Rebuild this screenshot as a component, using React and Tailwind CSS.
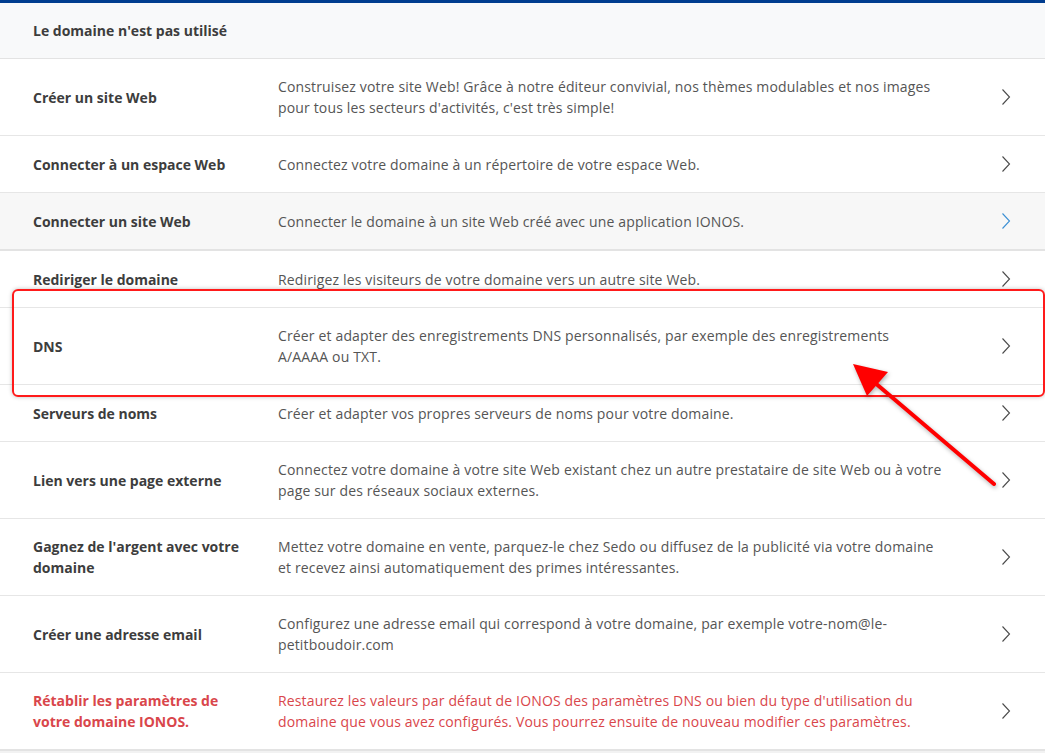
import React from "react";

const rows = [
  { t: "Créer un site Web", d: "Construisez votre site Web! Grâce à notre éditeur convivial, nos thèmes modulables et nos images pour tous les secteurs d'activités, c'est très simple!" },
  { t: "Connecter à un espace Web", d: "Connectez votre domaine à un répertoire de votre espace Web." },
  { t: "Connecter un site Web", d: "Connecter le domaine à un site Web créé avec une application IONOS.", hover: true },
  { t: "Rediriger le domaine", d: "Redirigez les visiteurs de votre domaine vers un autre site Web." },
  { t: "DNS", d: "Créer et adapter des enregistrements DNS personnalisés, par exemple des enregistrements A/AAAA ou TXT." },
  { t: "Serveurs de noms", d: "Créer et adapter vos propres serveurs de noms pour votre domaine." },
  { t: "Lien vers une page externe", d: "Connectez votre domaine à votre site Web existant chez un autre prestataire de site Web ou à votre page sur des réseaux sociaux externes." },
  { t: "Gagnez de l'argent avec votre domaine", d: "Mettez votre domaine en vente, parquez-le chez Sedo ou diffusez de la publicité via votre domaine et recevez ainsi automatiquement des primes intéressantes." },
  { t: "Créer une adresse email", d: "Configurez une adresse email qui correspond à votre domaine, par exemple votre-nom@le-petitboudoir.com" },
  { t: "Rétablir les paramètres de votre domaine IONOS.", d: "Restaurez les valeurs par défaut de IONOS des paramètres DNS ou bien du type d'utilisation du domaine que vous avez configurés. Vous pourrez ensuite de nouveau modifier ces paramètres.", red: true },
];

function Chevron({ blue }) {
  return (
    <svg width="10" height="18" viewBox="0 0 10 18" fill="none">
      <path d="M1.5 1.5 L8.5 9 L1.5 16.5" stroke={blue ? "#3b8fd4" : "#4a4a4a"} strokeWidth="1.1" />
    </svg>
  );
}

export default function App() {
  return (
    <div className="relative w-[1045px] h-[753px] overflow-hidden bg-white text-[14px] leading-[21px]" style={{ fontFamily: '"Open Sans", sans-serif' }}>
      <div className="h-[3px] bg-[#003d8f]" />
      <div className="h-[56px] bg-[#f8f9fa] flex items-center pl-[33px] border-b border-[#e3e3e3]">
        <span className="font-bold text-[#3d3d3d]">Le domaine n'est pas utilisé</span>
      </div>
      {rows.map((r, i) => (
        <div
          key={i}
          className={`flex items-center py-[17px] pl-[33px] ${r.hover ? "min-h-[58px] bg-[#f7f7f7] border-b-2 border-[#e3e3e3]" : i === rows.length - 1 ? "min-h-[57px] border-b-2 border-[#e3e3e3]" : "min-h-[57px] border-b border-[#e6e6e6]"}`}
        >
          <div className={`w-[245px] shrink-0 pr-[20px] font-bold ${r.red ? "text-[#d9464b]" : "text-[#3d3d3d]"}`}>{r.t}</div>
          <div className={`w-[664px] shrink-0 tracking-[0.15px] ${r.red ? "text-[#d9464b]" : "text-[#555555]"}`}>{r.d}</div>
          <div className="flex-1 flex justify-start pl-[59px]">
            <Chevron blue={r.hover} />
          </div>
        </div>
      ))}
      <div className="h-[10px] bg-[#f2f2f2]" />

      {/* annotation */}
      <div className="absolute left-[12px] top-[289px] w-[1033px] h-[108px] rounded-[6px] border-2 border-[#ff1a1a] shadow-[0_0_4px_rgba(0,0,0,0.25)] pointer-events-none" />
      <svg className="absolute left-0 top-0 pointer-events-none" width="1045" height="753" style={{ filter: "drop-shadow(1px 2px 2px rgba(0,0,0,0.3))" }}>
        <line x1="994" y1="484" x2="874" y2="382" stroke="#ff0000" strokeWidth="4" strokeLinecap="round" />
        <polygon points="853,364 888,372 867,396" fill="#ff0000" />
      </svg>
    </div>
  );
}
